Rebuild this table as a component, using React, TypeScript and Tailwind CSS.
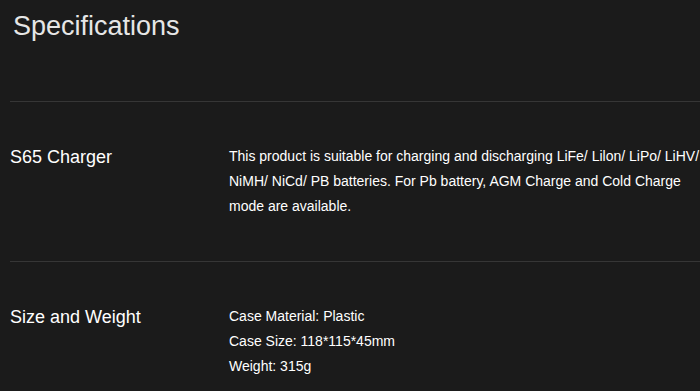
const specs = [
    {
        label: 'S65 Charger',
        lines: [
            'This product is suitable for charging and discharging LiFe/ Lilon/ LiPo/ LiHV/ NiMH/ NiCd/ PB batteries. For Pb battery, AGM Charge and Cold Charge mode are available.',
        ],
    },
    {
        label: 'Size and Weight',
        lines: ['Case Material: Plastic', 'Case Size: 118*115*45mm', 'Weight: 315g'],
    },
];

const App = () => {
    return (
        <div className="min-h-screen w-full overflow-hidden bg-[#1b1b1b] font-['Liberation_Sans',Arial,sans-serif]">
            {/* Heading */}
            <div className="h-[101px] pl-[13px] pt-[10px]">
                <h2 className="text-[27px] leading-[32px] text-[#e6e6e6]">Specifications</h2>
            </div>

            <div className="ml-[10px]">
                {specs.map((spec) => (
                    <div
                        key={spec.label}
                        className="flex w-[704px] border-t border-[#363636] pt-[42px] pb-[42px]"
                    >
                        <div className="w-[219px] shrink-0 text-[18px] leading-[26px] text-white">
                            {spec.label}
                        </div>
                        <div className="w-[485px] shrink-0 text-[14px] leading-[25px] text-white">
                            {spec.lines.map((line) => (
                                <p key={line}>{line}</p>
                            ))}
                        </div>
                    </div>
                ))}
            </div>
        </div>
    );
};

export default App;
